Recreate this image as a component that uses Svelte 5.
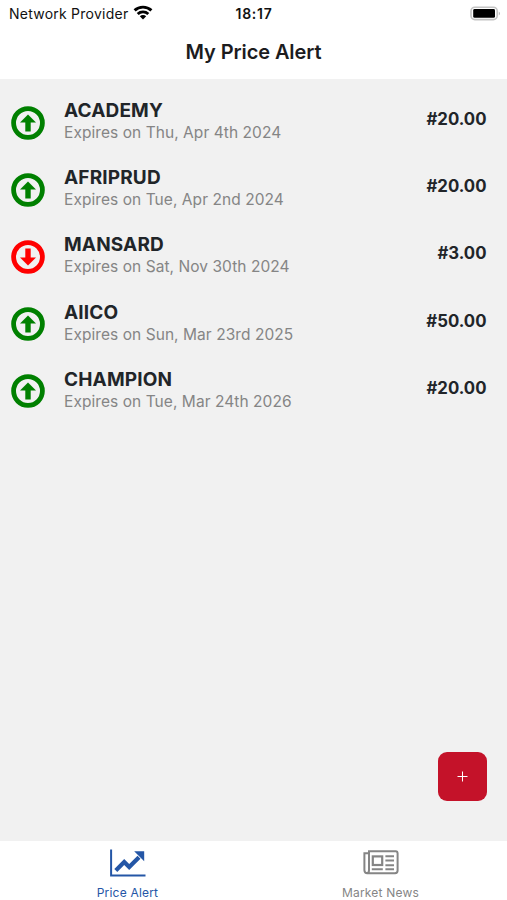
<script lang="ts">
  interface Alert {
    symbol: string;
    expires: string;
    price: string;
    direction: 'up' | 'down';
  }

  const alerts: Alert[] = [
    { symbol: 'ACADEMY', expires: 'Thu, Apr 4th 2024', price: '20.00', direction: 'up' },
    { symbol: 'AFRIPRUD', expires: 'Tue, Apr 2nd 2024', price: '20.00', direction: 'up' },
    { symbol: 'MANSARD', expires: 'Sat, Nov 30th 2024', price: '3.00', direction: 'down' },
    { symbol: 'AIICO', expires: 'Sun, Mar 23rd 2025', price: '50.00', direction: 'up' },
    { symbol: 'CHAMPION', expires: 'Tue, Mar 24th 2026', price: '20.00', direction: 'up' },
  ];

  let activeTab = $state('alerts');
</script>

<div class="screen">
  <div class="status-bar">
    <div class="status-left">
      <span class="carrier">Network Provider</span>
      <svg class="wifi" width="20" height="15" viewBox="0 0 20 15" fill="none" stroke="#000" stroke-width="2.9">
        <path d="M1.6 5.4C6.3 1 13.7 1 18.4 5.4" />
        <path d="M4.7 9C7.7 6.2 12.3 6.2 15.3 9" />
        <path d="M10 14.4L6.8 11.2C8.6 9.6 11.4 9.6 13.2 11.2Z" fill="#000" stroke="none" />
      </svg>
    </div>
    <span class="time">18:17</span>
    <div class="status-right">
      <svg width="32" height="16" viewBox="0 0 32 16">
        <rect x="1" y="1.2" width="26.2" height="12.4" rx="3.8" fill="#fff" stroke="#c4c4c4" stroke-width="1.6" />
        <rect x="3.2" y="3" width="21.8" height="8.8" rx="1.4" fill="#000" />
        <path d="M28.8 5.4Q31 7.4 28.8 9.6Z" fill="#b0b0b0" />
      </svg>
    </div>
  </div>

  <header class="header">
    <h1>My Price Alert</h1>
  </header>

  <main class="content">
    <ul class="alerts">
      {#each alerts as alert (alert.symbol)}
        <li class="alert">
          <svg
            class="direction"
            class:direction-down={alert.direction === 'down'}
            width="34"
            height="34"
            viewBox="0 0 34 34"
          >
            <circle cx="17" cy="17" r="14.4" fill="none" stroke="currentColor" stroke-width="4.8" />
            <path d="M17 8.6L25 16.6H19.7V25.4H14.3V16.6H9Z" fill="currentColor" />
          </svg>
          <div class="details">
            <span class="symbol">{alert.symbol}</span>
            <span class="expires">Expires on {alert.expires}</span>
          </div>
          <span class="price">#{alert.price}</span>
        </li>
      {/each}
    </ul>

    <button class="add" aria-label="Add price alert">
      <svg width="11" height="11" viewBox="0 0 11 11" stroke="#fff" stroke-width="1">
        <path d="M5.5 .5V10.5M.5 5.5H10.5" />
      </svg>
    </button>
  </main>

  <nav class="tabs">
    <button class="tab" class:tab-active={activeTab === 'alerts'} onclick={() => (activeTab = 'alerts')}>
      <svg class="tab-icon" width="36" height="28" viewBox="0 0 36 28" fill="none" stroke="currentColor">
        <path d="M1.1 .5V26.4H35.5" stroke-width="2" />
        <path d="M5.8 21.4L14.2 13L19.2 18L29 8.2" stroke-width="4.2" />
        <path d="M24.2 2.2H34.2V12.2Z" fill="currentColor" stroke="none" />
      </svg>
      <span class="tab-label">Price Alert</span>
    </button>
    <button class="tab" class:tab-active={activeTab === 'news'} onclick={() => (activeTab = 'news')}>
      <svg class="tab-icon" width="36" height="28" viewBox="0 0 36 28" fill="none" stroke="currentColor" stroke-width="2">
        <path d="M6 4.2H1.4V21.2Q1.6 24.2 4.2 24.2H32Q34.6 24 34.6 21.4V4.6Q34.6 2.2 32.6 2.2H6V21.2Q6 24 3.8 24.2" />
        <rect x="9.8" y="7.4" width="9.4" height="8.6" stroke-width="2.2" />
        <path d="M22.4 7.2H31M22.4 11.6H31M22.4 16.2H31M8.8 20.2H19.8M22.4 20.2H31" />
      </svg>
      <span class="tab-label">Market News</span>
    </button>
  </nav>
</div>

<style>
  :global(body) {
    background-color: #ffffff;
  }

  .screen {
    display: flex;
    flex-direction: column;
    height: 900px;
    overflow: hidden;
    background-color: #ffffff;
    color: #212529;
    font-family: Inter, 'Liberation Sans', sans-serif;
  }

  .status-bar {
    display: grid;
    grid-template-columns: 1fr auto 1fr;
    align-items: center;
    height: 27px;
    padding: 0 5px 0 9px;
    color: #111111;
    font-size: 14px;
    flex-shrink: 0;
  }

  .status-left {
    display: flex;
    align-items: center;
    gap: 5px;
  }

  .carrier {
    letter-spacing: 0.24px;
  }

  .wifi {
    margin-top: -2px;
  }

  .time {
    margin-right: 3px;
    font-weight: 600;
    letter-spacing: 0.7px;
  }

  .status-right {
    display: flex;
    justify-content: flex-end;
  }

  .header {
    display: flex;
    align-items: center;
    justify-content: center;
    height: 52px;
    flex-shrink: 0;
  }

  h1 {
    margin: -2px 0 0;
    color: #1c1c1e;
    font-size: 20px;
    font-weight: 600;
    letter-spacing: -0.1px;
    line-height: 24px;
  }

  .content {
    display: flex;
    flex: 1;
    flex-direction: column;
    justify-content: space-between;
    padding: 19px 20px 40px 10px;
    background-color: #f1f1f1;
  }

  .alerts {
    display: flex;
    flex-direction: column;
    gap: 20.2px;
    margin: 0;
    padding: 0;
    list-style: none;
  }

  .alert {
    display: flex;
    align-items: center;
    height: 47px;
    padding: 0 0.5px;
  }

  .direction {
    margin-top: 2.4px;
    color: #008000;
    flex-shrink: 0;
  }

  .direction-down {
    color: #ff0000;
    transform: rotate(180deg);
  }

  .details {
    display: flex;
    flex: 1;
    flex-direction: column;
    margin-left: 19.5px;
  }

  .symbol {
    font-size: 19px;
    font-weight: 650;
    letter-spacing: 0.15px;
    line-height: 22px;
  }

  .expires {
    color: #858585;
    font-size: 15.5px;
    letter-spacing: 0.06px;
    line-height: 21px;
  }

  .price {
    margin-bottom: 5px;
    font-size: 16.8px;
    font-weight: 700;
  }

  .add {
    display: flex;
    align-items: center;
    align-self: flex-end;
    justify-content: center;
    width: 49px;
    height: 49px;
    padding: 0;
    border: none;
    border-radius: 9px;
    background-color: #c41229;
    cursor: pointer;
  }

  .tabs {
    display: flex;
    height: 59px;
    padding-left: 1px;
    flex-shrink: 0;
  }

  .tab {
    display: flex;
    flex: 1;
    flex-direction: column;
    align-items: center;
    gap: 8px;
    padding: 8px 0 0;
    border: none;
    background: none;
    color: #858585;
    font-family: inherit;
    cursor: pointer;
  }

  .tab-active {
    color: #2456a6;
  }

  .tab-icon {
    flex-shrink: 0;
  }

  .tab-label {
    font-size: 12px;
    letter-spacing: 0.2px;
    line-height: 16px;
  }
</style>
